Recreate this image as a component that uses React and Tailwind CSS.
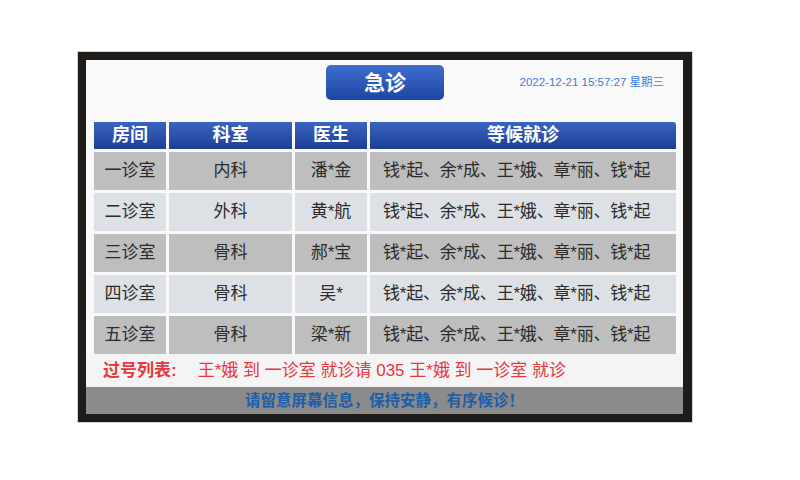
import React from "react";

const rows = [
  { room: "一诊室", dept: "内科", doctor: "潘*金" },
  { room: "二诊室", dept: "外科", doctor: "黄*航" },
  { room: "三诊室", dept: "骨科", doctor: "郝*宝" },
  { room: "四诊室", dept: "骨科", doctor: "吴*" },
  { room: "五诊室", dept: "骨科", doctor: "梁*新" },
];

const waiting = "钱*起、余*成、王*娥、章*丽、钱*起";

const App = () => {
  return (
    <div className="w-[800px] h-[480px] bg-white pt-[52px] pl-[78px] font-[family-name:'Liberation_Sans','Noto_Sans_CJK_SC',sans-serif]">
      {/* Monitor frame */}
      <div className="w-[614px] h-[370px] bg-[#1f1b19] pt-[8px] pl-[8px] shadow-[0_0_0_1px_#d4d4d4]">
        <div className="w-[597px] h-[354px] bg-[#f9f9fa] flex flex-col">
          {/* Top bar */}
          <div className="h-[62px] grid grid-cols-[240px_118px_1fr] items-start pt-[5px]">
            <div />
            <div className="h-[35px] rounded-[5px] bg-linear-to-b from-[#3f6ed0] to-[#1d46a3] flex items-center justify-center text-white text-[21px] font-bold">
              急诊
            </div>
            <div className="h-[35px] flex items-center justify-end pr-[19px] text-[11.5px] text-[#3b7dd8]">
              2022-12-21 15:57:27 星期三
            </div>
          </div>

          {/* Table */}
          <div className="px-[8px] grid grid-cols-[72px_123px_72px_306px] gap-[3px]">
            {["房间", "科室", "医生", "等候就诊"].map((h, i) => (
              <div
                key={h}
                className={`h-[27px] bg-linear-to-b from-[#3a64c2] to-[#1c3f94] flex items-center justify-center text-white text-[18px] font-bold ${
                  i === 3 ? "rounded-tr-[3px]" : ""
                }`}
              >
                {h}
              </div>
            ))}
            {rows.map((r, i) => {
              const bg = i % 2 === 0 ? "bg-[#bebebe]" : "bg-[#dde1e6]";
              return (
                <React.Fragment key={r.room}>
                  <div className={`h-[38px] ${bg} flex items-center justify-center text-[17px] text-[#2b2b2b]`}>
                    {r.room}
                  </div>
                  <div className={`h-[38px] ${bg} flex items-center justify-center text-[17px] text-[#2b2b2b]`}>
                    {r.dept}
                  </div>
                  <div className={`h-[38px] ${bg} flex items-center justify-center text-[17px] text-[#2b2b2b]`}>
                    {r.doctor}
                  </div>
                  <div className={`h-[38px] ${bg} flex items-center pl-[13px] text-[17px] tracking-[-0.2px] text-[#2b2b2b]`}>
                    {waiting}
                  </div>
                </React.Fragment>
              );
            })}
          </div>

          {/* Missed numbers */}
          <div className="h-[33px] bg-[#f4f4f5] flex items-center pl-[17px] text-[17px] text-[#e6383e]">
            <span className="font-bold">过号列表:</span>
            <span className="ml-[21px]">王*娥 到 一诊室 就诊请 035 王*娥 到 一诊室 就诊</span>
          </div>

          {/* Footer notice */}
          <div className="h-[27px] bg-[#8b8b8b] flex items-center justify-center text-[15.5px] font-bold text-[#1d5ea8]">
            请留意屏幕信息，保持安静，有序候诊！
          </div>
        </div>
      </div>
    </div>
  );
};

export default App;
